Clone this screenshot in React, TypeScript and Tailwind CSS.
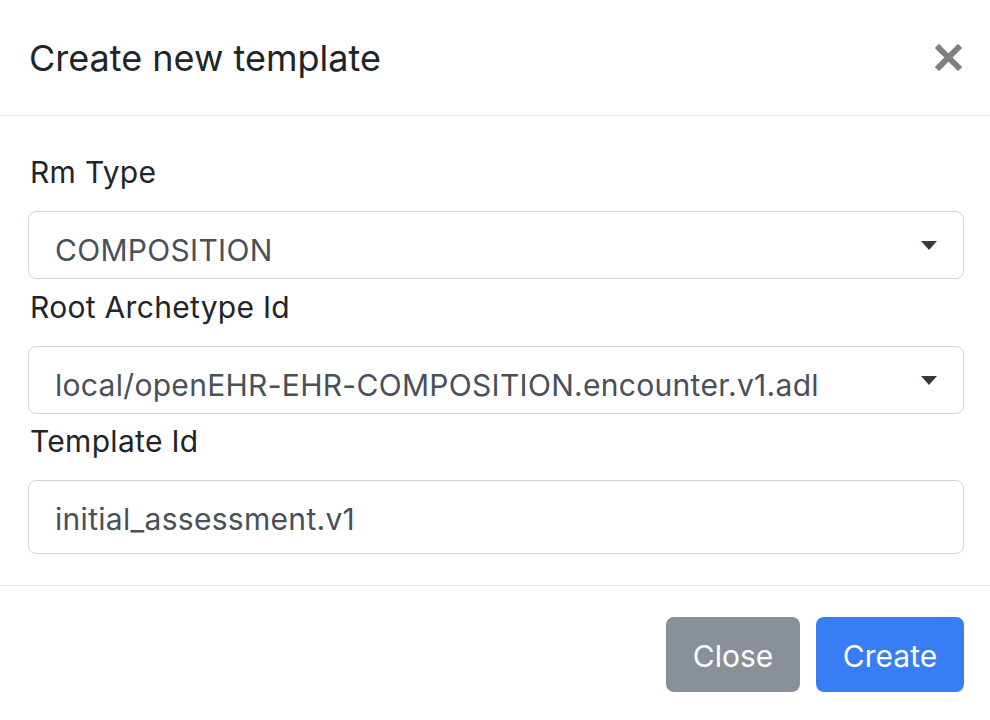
const font = { fontFamily: 'Inter, "Noto Sans", sans-serif' }

function Caret() {
  return (
    <svg width="16" height="9" viewBox="0 0 16 9" className="shrink-0">
      <path d="M0 0 L16 0 L8 9 Z" fill="#343a40" />
    </svg>
  )
}

function SelectBox({ value }: { value: string }) {
  return (
    <div className="flex h-[68px] items-center justify-between rounded-[8px] border border-[#ced4da] bg-white pl-[26px] pr-[26px]">
      <span className="pt-[10px] text-[30px] tracking-[0.3px] text-[#495057]">{value}</span>
      <Caret />
    </div>
  )
}

export default function App() {
  return (
    <div className="h-[720px] w-[990px] overflow-hidden bg-white text-[#212529]" style={font}>
      <div className="flex h-[116px] items-center justify-between border-b border-[#e9ecef] pl-[29px] pr-[28px]">
        <h5 className="text-[36px] font-normal leading-none">Create new template</h5>
        <svg width="27" height="27" viewBox="0 0 27 27">
          <path d="M4 4 L23 23 M23 4 L4 23" stroke="#808080" strokeWidth="6" strokeLinecap="square" />
        </svg>
      </div>

      <div className="border-b border-[#e9ecef] pb-[31px] pl-[28px] pr-[26px] pt-[33px]">
        <label className="mb-[18px] block h-[44px] pl-[2px] pt-[2px] text-[30px] leading-[42px] tracking-[0.3px]">Rm Type</label>
        <SelectBox value="COMPOSITION" />
        <label className="mb-[18px] mt-[5px] block h-[44px] pl-[2px] pt-[2px] text-[30px] leading-[42px] tracking-[0.3px]">Root Archetype Id</label>
        <SelectBox value="local/openEHR-EHR-COMPOSITION.encounter.v1.adl" />
        <label className="mb-[18px] mt-[4px] block h-[44px] pl-[2px] pt-[2px] text-[30px] leading-[42px] tracking-[0.3px]">Template Id</label>
        <div className="flex h-[74px] items-center rounded-[8px] border border-[#ced4da] bg-white pl-[26px]">
          <span className="pt-[4px] text-[30px] tracking-[0.3px] text-[#495057]">initial_assessment.v1</span>
        </div>
      </div>

      <div className="flex justify-end gap-[16px] pr-[26px] pt-[31px]">
        <button className="h-[75px] w-[134px] rounded-[8px] bg-[#899097] pt-[4px] text-[30px] text-white">Close</button>
        <button className="h-[75px] w-[148px] rounded-[8px] bg-[#377df6] pt-[4px] text-[30px] text-white">Create</button>
      </div>
    </div>
  )
}
